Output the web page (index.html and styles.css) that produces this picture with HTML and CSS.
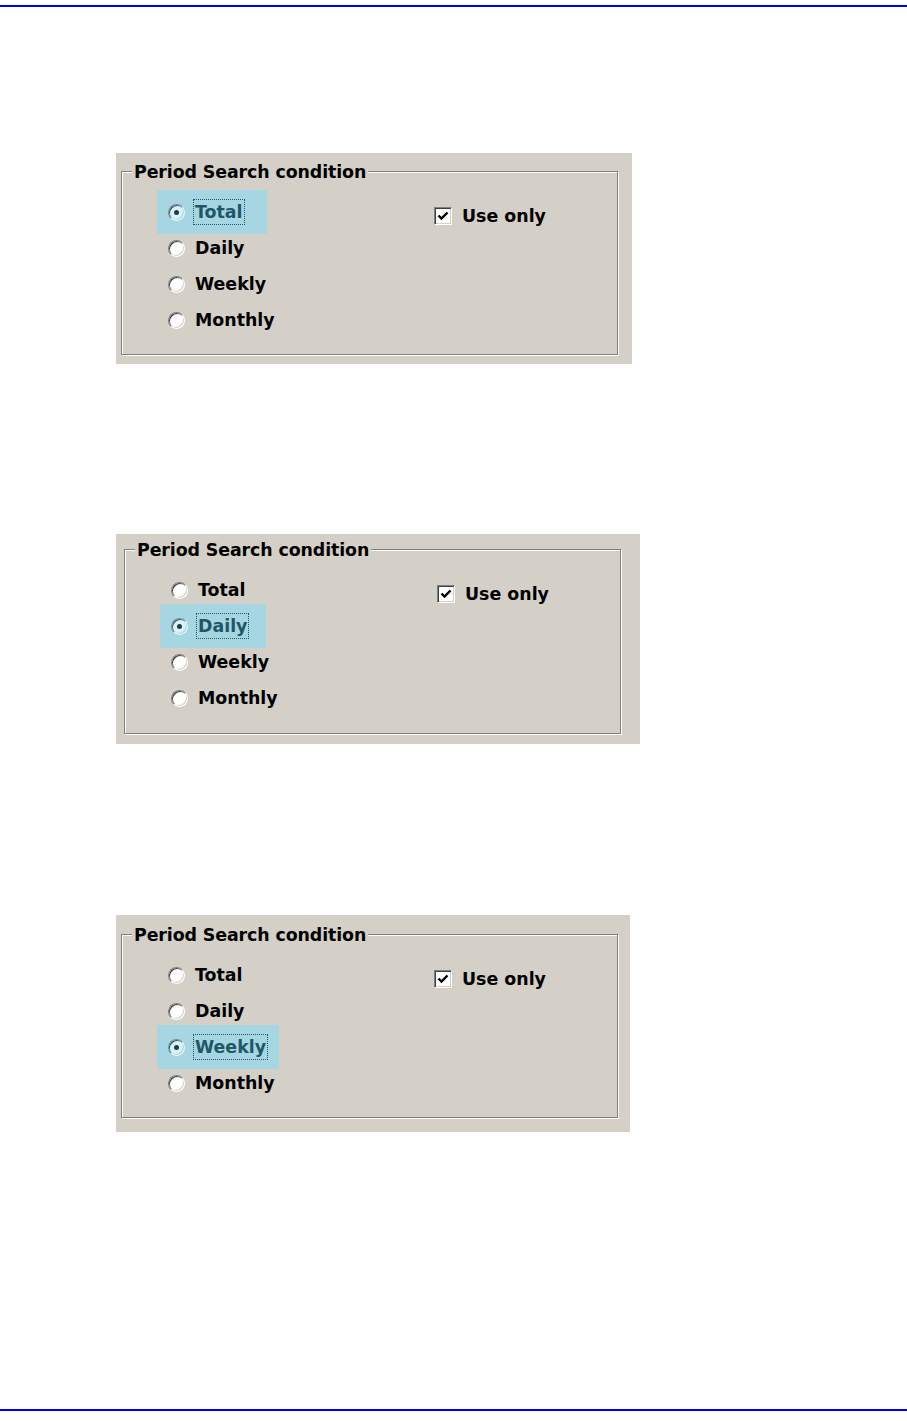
FILE: index.html
```html
<!DOCTYPE html>
<html>
<head>
<meta charset="utf-8">
<title>Period Search condition</title>
<link rel="stylesheet" href="styles.css">
</head>
<body>
<div class="page">
  <div class="rule rule-top"></div>

  <div class="panel p1">
    <div class="frame">
      <span class="legend">Period Search condition</span>
      <div class="cols">
        <div class="radios">
          <div class="row sel w-total"><span class="radio on"></span><span class="lbl focus">Total</span></div>
          <div class="row"><span class="radio"></span><span class="lbl">Daily</span></div>
          <div class="row"><span class="radio"></span><span class="lbl">Weekly</span></div>
          <div class="row"><span class="radio"></span><span class="lbl">Monthly</span></div>
        </div>
        <div class="check-row">
          <span class="check"><svg viewBox="0 0 12 12" width="12" height="12"><path d="M1.5 5.5 L4.5 8.5 L10.5 2.5" fill="none" stroke="#000" stroke-width="2.4"/></svg></span>
          <span class="lbl">Use only</span>
        </div>
      </div>
    </div>
  </div>

  <div class="panel p2">
    <div class="frame">
      <span class="legend">Period Search condition</span>
      <div class="cols">
        <div class="radios">
          <div class="row"><span class="radio"></span><span class="lbl">Total</span></div>
          <div class="row sel w-daily"><span class="radio on"></span><span class="lbl focus">Daily</span></div>
          <div class="row"><span class="radio"></span><span class="lbl">Weekly</span></div>
          <div class="row"><span class="radio"></span><span class="lbl">Monthly</span></div>
        </div>
        <div class="check-row">
          <span class="check"><svg viewBox="0 0 12 12" width="12" height="12"><path d="M1.5 5.5 L4.5 8.5 L10.5 2.5" fill="none" stroke="#000" stroke-width="2.4"/></svg></span>
          <span class="lbl">Use only</span>
        </div>
      </div>
    </div>
  </div>

  <div class="panel p3">
    <div class="frame">
      <span class="legend">Period Search condition</span>
      <div class="cols">
        <div class="radios">
          <div class="row"><span class="radio"></span><span class="lbl">Total</span></div>
          <div class="row"><span class="radio"></span><span class="lbl">Daily</span></div>
          <div class="row sel w-weekly"><span class="radio on"></span><span class="lbl focus">Weekly</span></div>
          <div class="row"><span class="radio"></span><span class="lbl">Monthly</span></div>
        </div>
        <div class="check-row">
          <span class="check"><svg viewBox="0 0 12 12" width="12" height="12"><path d="M1.5 5.5 L4.5 8.5 L10.5 2.5" fill="none" stroke="#000" stroke-width="2.4"/></svg></span>
          <span class="lbl">Use only</span>
        </div>
      </div>
    </div>
  </div>

  <div class="rule rule-bottom"></div>
</div>
</body>
</html>
```
FILE: styles.css
```css
html, body {
  margin: 0;
  padding: 0;
  background: #fff;
}

.page {
  display: flex;
  flex-direction: column;
  width: 907px;
  height: 1421px;
  font-family: "DejaVu Sans", "Liberation Sans", sans-serif;
  font-weight: bold;
  font-size: 17.4px;
  color: #000;
}

.rule {
  height: 2px;
  background: #0000ff;
  width: 907px;
}
.rule-top { margin-top: 5px; }
.rule-bottom { margin-top: 277px; }

.panel {
  margin-left: 116px;
  background: #d4d0c8;
  box-sizing: border-box;
  display: flex;
  flex-direction: column;
}
.p1 { margin-top: 146px; width: 516px; height: 211px; }
.p2 { margin-top: 170px; width: 524px; height: 210px; }
.p3 { margin-top: 171px; width: 514px; height: 217px; }

.frame {
  position: relative;
  box-sizing: border-box;
  width: 497px;
  height: 184px;
  border: 1px solid #808080;
  box-shadow: 1px 1px 0 #fff, inset 1px 1px 0 #fff;
  padding: 22px 0 0 46px;
}
.p1 .frame { margin: 18px 0 0 5px; }
.p2 .frame { margin: 15px 0 0 8px; height: 185px; }
.p3 .frame { margin: 19px 0 0 5px; height: 184px; }

.legend {
  position: absolute;
  top: -10px;
  left: 10px;
  padding: 0 2px;
  line-height: 20px;
  background: #d4d0c8;
  white-space: nowrap;
  letter-spacing: -0.1px;
}

.cols {
  display: flex;
  align-items: flex-start;
}

.radios {
  width: 266px;
  display: flex;
  flex-direction: column;
}

.row {
  display: flex;
  align-items: center;
  height: 36px;
  box-sizing: content-box;
  align-self: flex-start;
}

.row.sel {
  margin: -4px 0 -4px -11px;
  padding: 4px 0 4px 11px;
  background: #a5d6e1;
  color: #1f5767;
  box-sizing: border-box;
  height: 44px;
}
.w-total { width: 110px; }
.w-daily { width: 106px; }
.w-weekly { width: 122px; }

.radio {
  width: 17px;
  height: 17px;
  box-sizing: border-box;
  border-radius: 50%;
  border: 1px solid;
  border-color: #808080 #ffffff #ffffff #808080;
  background: #fff;
  box-shadow: inset 1px 1px 0 #404040, inset -1px -1px 0 #d4d0c8;
  display: flex;
  align-items: center;
  justify-content: center;
  margin-right: 8px;
  flex: none;
}
.sel .radio {
  background: #dcf1f6;
  border-color: #6f8f98 #e6f6f9 #e6f6f9 #6f8f98;
  box-shadow: inset 1px 1px 0 #3a5a64, inset -1px -1px 0 #a5d6e1;
}
.radio.on::after {
  content: "";
  width: 5px;
  height: 5px;
  border-radius: 50%;
  background: #000;
}
.sel .radio.on::after { background: #173f4a; }

.lbl {
  line-height: 20px;
  padding: 2px 1px;
  border: 1px dotted transparent;
  white-space: nowrap;
}
.lbl.focus {
  border-color: #1f5767;
}

.check-row {
  display: flex;
  align-items: center;
  height: 36px;
  margin-top: 4px;
}

.check {
  width: 18px;
  height: 18px;
  box-sizing: border-box;
  border: 1px solid;
  border-color: #808080 #ffffff #ffffff #808080;
  box-shadow: inset 1px 1px 0 #404040, inset -1px -1px 0 #d4d0c8;
  background: #fff;
  display: flex;
  align-items: center;
  justify-content: center;
  margin-right: 8px;
  flex: none;
}
.check svg { display: block; }
```
